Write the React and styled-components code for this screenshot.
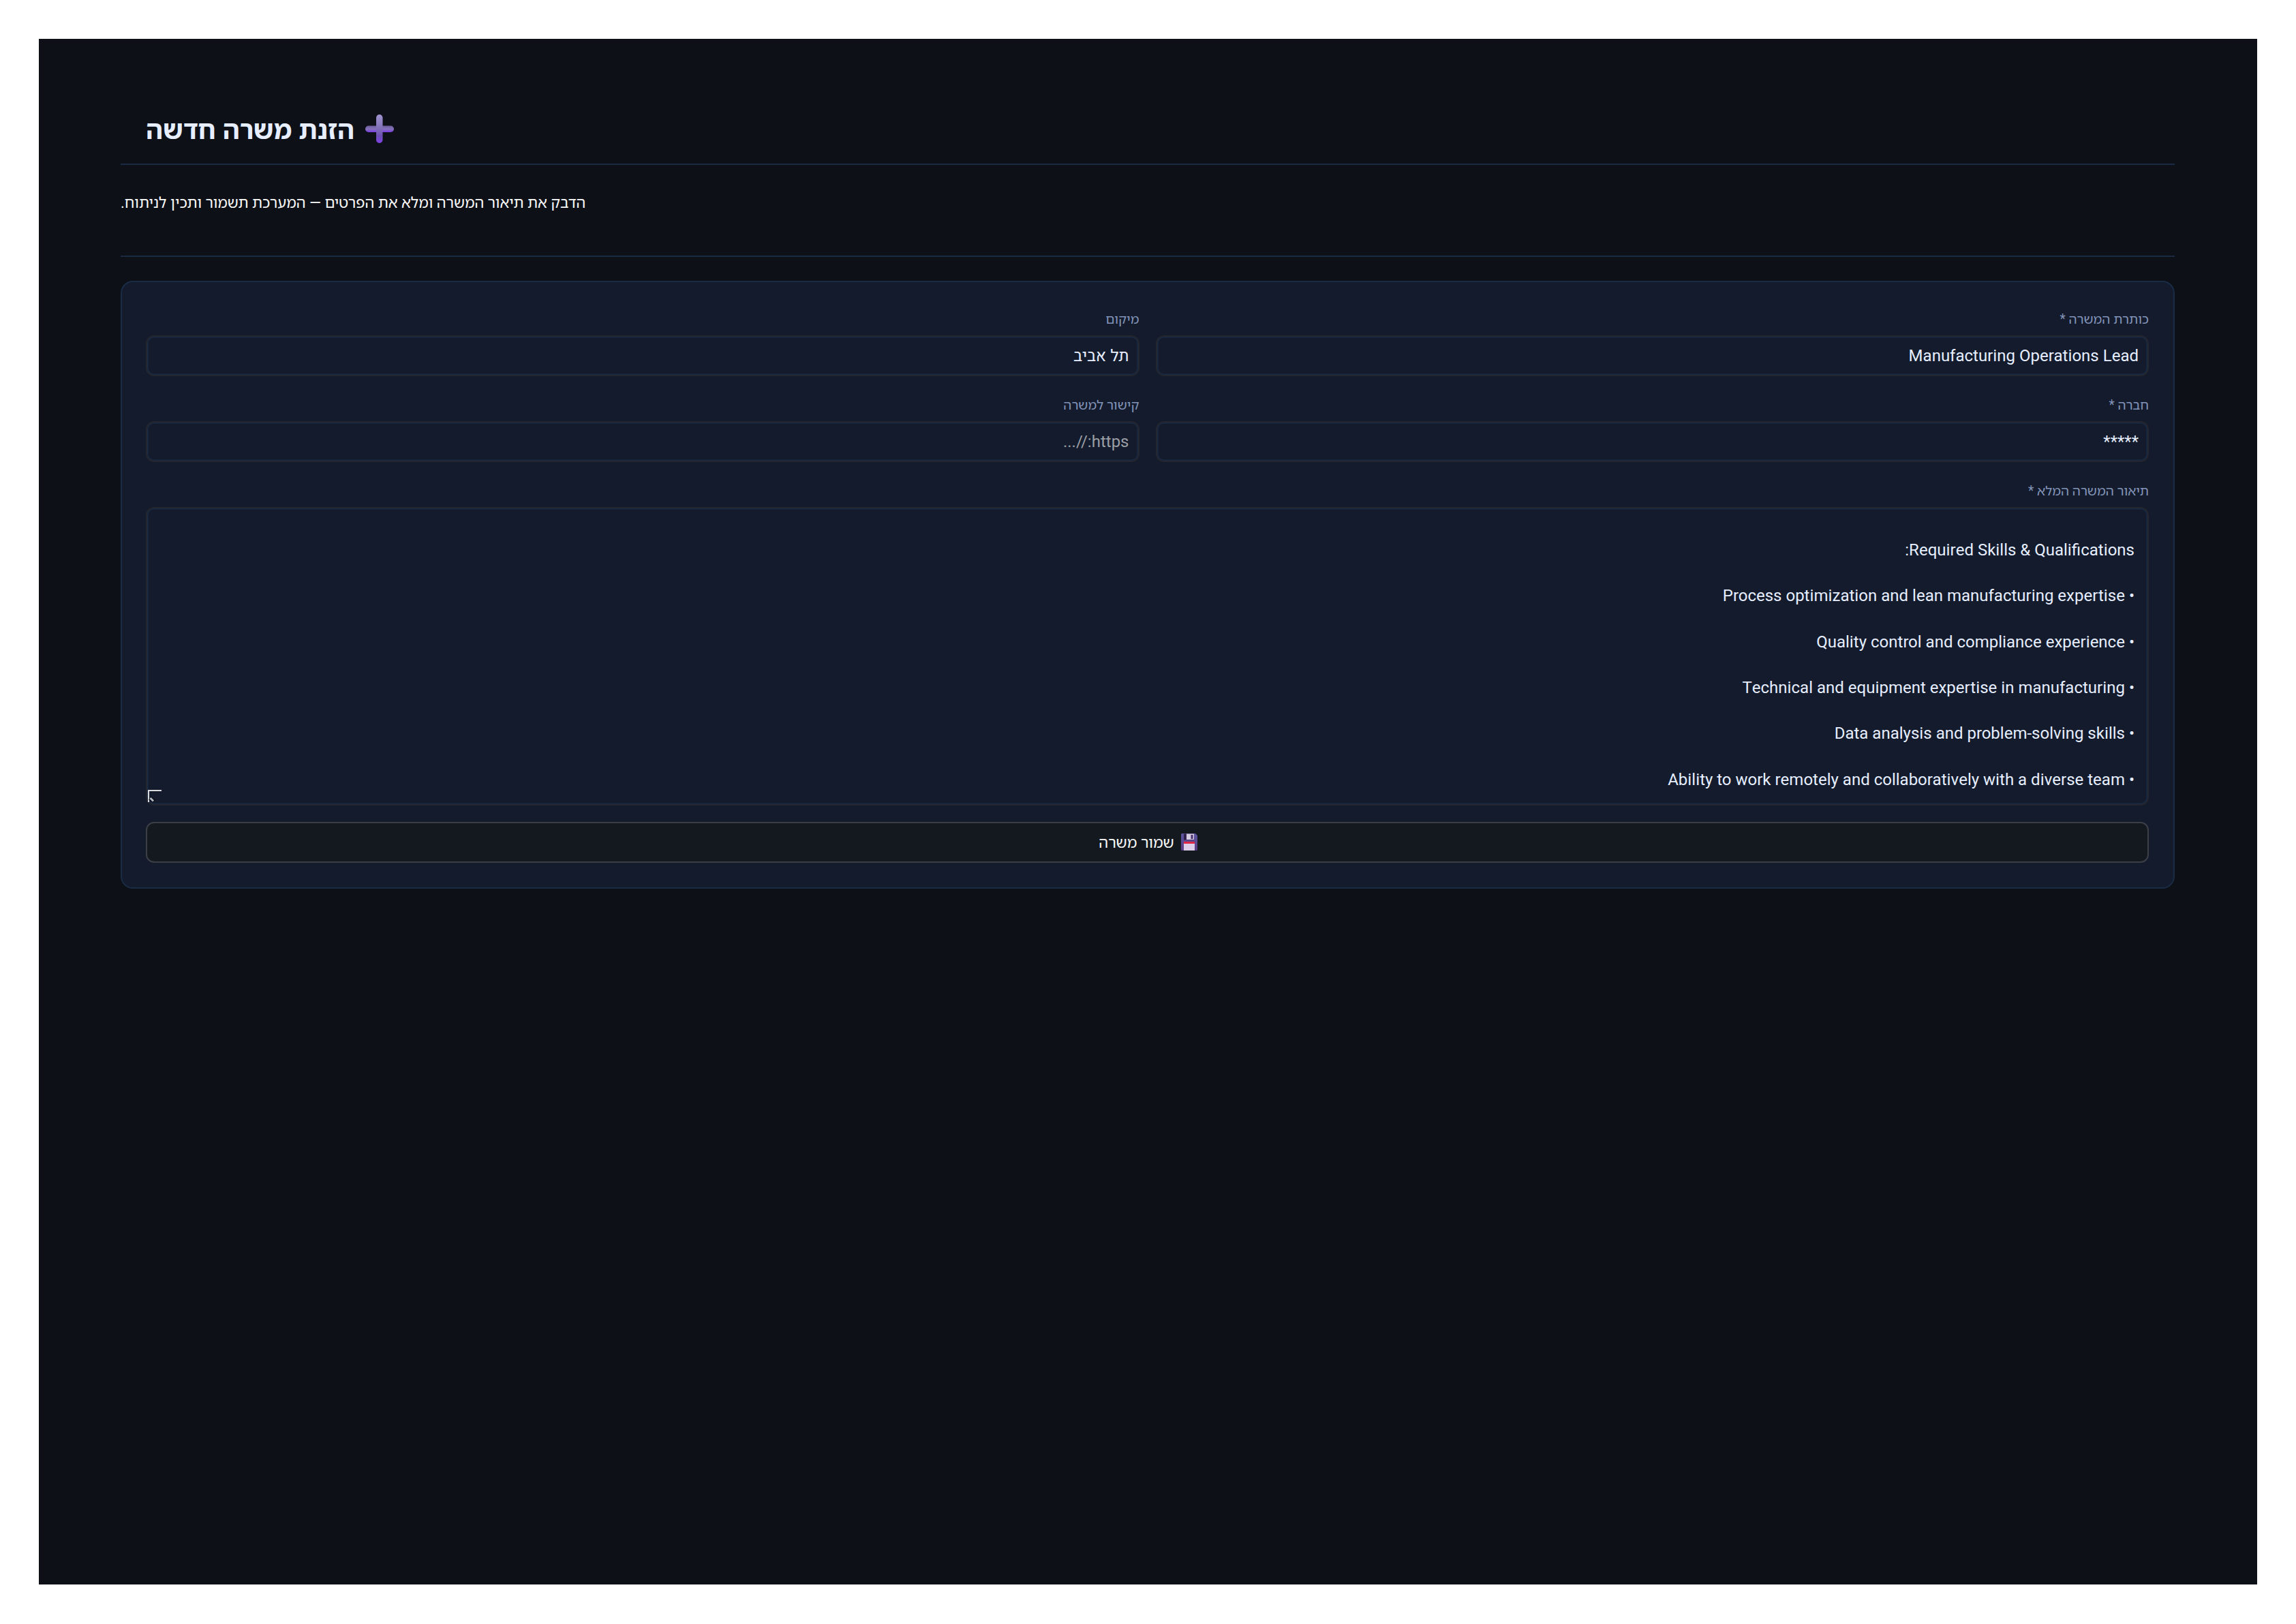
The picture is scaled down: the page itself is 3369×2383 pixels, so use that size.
import React, { useState } from 'react';
import styled, { createGlobalStyle } from 'styled-components';

const description = [
    '',
    'Required Skills & Qualifications:',
    '',
    '• Process optimization and lean manufacturing expertise',
    '',
    '• Quality control and compliance experience',
    '',
    '• Technical and equipment expertise in manufacturing',
    '',
    '• Data analysis and problem-solving skills',
    '',
    '• Ability to work remotely and collaboratively with a diverse team',
].join('\n');

const PlusIcon = () => (
    <svg width="42" height="42" viewBox="0 0 42 42">
        <defs>
            <linearGradient id="plusH" x1="0" y1="0" x2="0" y2="1">
                <stop offset="0" stopColor="#6d5c9c" />
                <stop offset="0.5" stopColor="#8474b8" />
                <stop offset="1" stopColor="#7a3ae6" />
            </linearGradient>
            <linearGradient id="plusV" x1="0" y1="0" x2="0" y2="1">
                <stop offset="0" stopColor="#a094d0" />
                <stop offset="0.45" stopColor="#8272b8" />
                <stop offset="0.75" stopColor="#6c50b4" />
                <stop offset="1" stopColor="#8040ea" />
            </linearGradient>
        </defs>
        <rect x="0" y="16.5" width="42" height="9.5" rx="4.7" fill="url(#plusH)" />
        <rect x="16" y="0" width="9.5" height="42" rx="4.7" fill="url(#plusV)" />
    </svg>
);

const SaveIcon = () => (
    <svg width="24" height="25" viewBox="0 0 24 25">
        <defs>
            <linearGradient id="disk" x1="0" y1="0" x2="0" y2="1">
                <stop offset="0" stopColor="#5d55a0" />
                <stop offset="1" stopColor="#5a3c86" />
            </linearGradient>
        </defs>
        <path d="M1.5 0H21L24 3V23.5Q24 25 22.5 25H1.5Q0 25 0 23.5V1.5Q0 0 1.5 0Z" fill="url(#disk)" />
        <rect x="4" y="0.5" width="15" height="9" fill="#32204f" />
        <rect x="8" y="0.5" width="11" height="8.5" fill="#d6cce4" />
        <rect x="14.5" y="2" width="3" height="6" fill="#47306b" />
        <rect x="4" y="12" width="16" height="13" fill="#dccdea" />
        <rect x="4" y="12" width="16" height="3" fill="#dc2646" />
    </svg>
);

const ResizeGrip = () => (
    <svg width="20" height="18" viewBox="0 0 20 18">
        <path d="M1 18V1H20" fill="none" stroke="#d8dade" strokeWidth="2" />
        <path d="M3 12L9 17" stroke="#0b101b" strokeWidth="6" />
        <path d="M3.5 12L8 16.5" stroke="#b4b8c0" strokeWidth="3" />
    </svg>
);

export default function App() {
    const [form, setForm] = useState({
        title: 'Manufacturing Operations Lead',
        location: 'תל אביב',
        company: '*****',
        link: '',
        description: description,
    });

    const handleChange = (e) => {
        setForm({ ...form, [e.target.name]: e.target.value });
    };

    return (
        <Page>
            <GlobalStyle />
            <Screen>
                <Header>
                    <PlusIcon />
                    <Title>הזנת משרה חדשה</Title>
                </Header>
                <Intro>הדבק את תיאור המשרה ומלא את הפרטים — המערכת תשמור ותכין לניתוח.</Intro>
                <Card onSubmit={(e) => e.preventDefault()}>
                    <Columns>
                        <Field>
                            <Label>כותרת המשרה *</Label>
                            <Input name="title" value={form.title} onChange={handleChange} />
                        </Field>
                        <Field>
                            <Label>מיקום</Label>
                            <Input name="location" value={form.location} onChange={handleChange} />
                        </Field>
                        <Field>
                            <Label>חברה *</Label>
                            <Input name="company" value={form.company} onChange={handleChange} />
                        </Field>
                        <Field>
                            <Label>קישור למשרה</Label>
                            <Input name="link" placeholder="https://..." value={form.link} onChange={handleChange} />
                        </Field>
                    </Columns>
                    <Field>
                        <Label>תיאור המשרה המלא *</Label>
                        <AreaWrapper>
                            <TextArea name="description" value={form.description} onChange={handleChange} />
                            <Grip><ResizeGrip /></Grip>
                        </AreaWrapper>
                    </Field>
                    <SaveButton type="submit">
                        <SaveIcon />
                        <span>שמור משרה</span>
                    </SaveButton>
                </Card>
            </Screen>
        </Page>
    );
}

const bodyFont = 'Roboto, "Noto Sans Hebrew", "Open Sans", sans-serif';
const inputFont = 'Heebo, Roboto, "Noto Sans Hebrew", "Open Sans", sans-serif';

const GlobalStyle = createGlobalStyle`
    * {
        box-sizing: border-box;
    }
    body {
        margin: 0;
        background: #fff;
        font-family: ${bodyFont};
    }
`;

const Page = styled.div`
    width: 3369px;
    height: 2383px;
    padding: 57px 57px 58px;
    direction: rtl;
`;

const Screen = styled.main`
    height: 2268px;
    padding: 94px 121px 0 120px;
    background: #0d1017;
`;

const Header = styled.header`
    display: flex;
    align-items: center;
    justify-content: flex-end;
    gap: 16px;
    height: 91px;
    padding: 0 0 13px 37px;
    border-bottom: 2px solid #1b2a43;
`;

const Title = styled.h1`
    margin: 0;
    padding-top: 4px;
    font-size: 38px;
    font-weight: 700;
    line-height: 50px;
    word-spacing: 0.5px;
    color: #e6eeff;
`;

const Intro = styled.p`
    display: flex;
    justify-content: flex-end;
    height: 135px;
    margin: 0 0 35px;
    padding-top: 38px;
    border-bottom: 2px solid #1b2a43;
    font-size: 21.95px;
    line-height: 36px;
    color: #fafafa;
`;

const Card = styled.form`
    display: flex;
    flex-direction: column;
    gap: 24px;
    height: 892px;
    padding: 36px 36px 0 35px;
    border: 2px solid #1a2b45;
    border-radius: 18px;
    background: #131b2d;
`;

const Columns = styled.div`
    display: grid;
    grid-template-columns: 1fr 1fr;
    gap: 24px;
`;

const Field = styled.div`
    display: flex;
    flex-direction: column;
    gap: 7px;
`;

const Label = styled.label`
    height: 35px;
    font-size: 19.3px;
    line-height: 37px;
    color: #8394b8;
`;

const Input = styled.input`
    width: 100%;
    height: 60px;
    padding: 0 13px;
    border: 2px solid #23262f;
    border-radius: 12px;
    outline: none;
    background: #131b2d;
    box-shadow: inset 0 0 0 1.5px #1a2b45;
    font-family: ${inputFont};
    font-size: 24px;
    color: #e6eeff;
    &::placeholder {
        color: #9a9ea4;
        opacity: 1;
    }
`;

const AreaWrapper = styled.div`
    position: relative;
    height: 438px;
`;

const TextArea = styled.textarea`
    display: block;
    width: 100%;
    height: 438px;
    padding: 11px 19px 8px;
    border: 2px solid #23262f;
    border-radius: 12px;
    outline: none;
    resize: none;
    overflow: hidden;
    background: #131b2d;
    box-shadow: inset 0 0 0 1.5px #1a2b45;
    font-family: ${inputFont};
    font-size: 24px;
    line-height: 33.7px;
    color: #e6eeff;
`;

const Grip = styled.span`
    position: absolute;
    left: 3px;
    bottom: 5px;
    display: flex;
`;

const SaveButton = styled.button`
    display: flex;
    align-items: center;
    justify-content: center;
    gap: 10px;
    width: 100%;
    height: 60px;
    padding: 0 6px 2px 8px;
    border: 2px solid #3c3f46;
    border-radius: 12px;
    background: #14181f;
    font-family: ${bodyFont};
    font-size: 22.2px;
    color: #fafafa;
    cursor: pointer;
`;
